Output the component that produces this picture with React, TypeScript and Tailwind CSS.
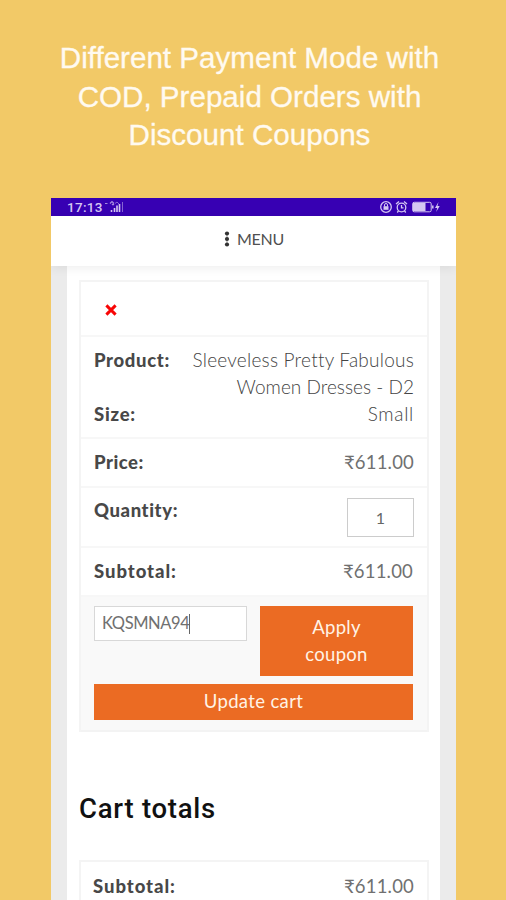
import React from 'react';

interface RowProps {
    label: string;
    children: React.ReactNode;
    className?: string;
    labelClass?: string;
}

const Row: React.FC<RowProps> = ({ label, children, className = '', labelClass = 'tracking-[0.95px]' }) => (
    <div className={`flex justify-between border-b-2 border-[#f7f7f7] pl-[13px] pr-[13px] leading-[27px] ${className}`}>
        <span className={`font-black text-[#484848] ${labelClass}`}>{label}</span>
        {children}
    </div>
);

const Price: React.FC = () => <span className="tracking-[0.2px] text-[#707070]">₹611.00</span>;

const StatusBar: React.FC = () => (
    <div className="flex h-[18px] items-center justify-between bg-[#3700b3] pl-4 pr-[15px] pt-px text-[#d5c7f2]">
        <div className="flex items-center">
            <span className="w-[35px] font-[Roboto,sans-serif] text-[13.5px] font-medium leading-[18px] tracking-[0.3px]">17:13</span>
            <svg className="ml-[2px]" width="21" height="14" viewBox="0 0 21 14" fill="none" stroke="currentColor">
                <path d="M1 3.500h2.500M6 3.500l2-2 2 2M8 5l1-1 1 1" strokeWidth="1.200" opacity=".7" />
                <path d="M7.500 12v-2M10.500 12V8M13 12V5.500M15.500 12V4" strokeWidth="1.600" />
                <path d="M11 3.500l2-1.500 2 2M18.500 12V2" strokeWidth="1" opacity=".5" />
            </svg>
        </div>
        <svg width="62" height="14" viewBox="0 0 62 14" fill="none" stroke="currentColor" strokeWidth="1.300">
            <circle cx="7" cy="7" r="5.300" />
            <rect x="4.500" y="6.200" width="5" height="3.600" fill="currentColor" stroke="none" />
            <path d="M5.500 6.500V5a1.500 1.500 0 0 1 3 0v1.500" strokeWidth="1" />
            <circle cx="22.500" cy="7.500" r="4.300" />
            <path d="M22.500 5v2.800h2M17 4l3-2.500M28 4l-3-2.500M19.500 11l-1.300 1.500M25.500 11l1.300 1.500" />
            <rect x="33.700" y="2.300" width="18.500" height="9.500" rx="1.500" strokeWidth="1" />
            <rect x="34" y="3" width="12.500" height="8" fill="currentColor" stroke="none" />
            <path d="M53.800 5.500v3" strokeWidth="1.500" />
            <path d="M59.500 2l-3.500 6h2.200l-1 4 3.500-6h-2.200z" fill="currentColor" stroke="none" />
        </svg>
    </div>
);

const Header: React.FC = () => (
    <div className="relative flex h-[50px] items-center bg-white pl-[173px] pb-[4px] text-[#505050] shadow-[0_2px_10px_rgba(0,0,0,0.07)]">
        <svg width="6" height="16" viewBox="0 0 6 16" fill="#333">
            <path d="M3 2v12" stroke="#999" strokeWidth="1" />
            <circle cx="3" cy="2.500" r="2.100" />
            <circle cx="3" cy="8" r="2.100" />
            <circle cx="3" cy="13.500" r="2.100" />
        </svg>
        <span className="ml-[7px] text-[16px] leading-5 tracking-[-0.3px]">MENU</span>
    </div>
);

const CartTable: React.FC = () => (
    <div className="border-2 border-b-0 border-[#f4f4f4] text-[18.5px]">
        <div className="flex h-[55px] items-center border-b-2 border-[#f7f7f7] pl-[24px] pt-[4px]">
            <svg width="12" height="12" viewBox="0 0 13 13" stroke="#f80505" strokeWidth="3.200">
                <path d="M1.500 1.500l10 10M11.500 1.500l-10 10" />
            </svg>
        </div>
        <div className="h-[102px] border-b-2 border-[#f7f7f7] px-[13px] pt-[10px] leading-[27px]">
            <div className="flex justify-between">
                <span className="font-black tracking-[0.65px] text-[#484848]">Product:</span>
                <span className="-mt-px mb-px text-right text-[19px] font-light text-[#444]">
                    <span className="tracking-[0.24px]">Sleeveless Pretty Fabulous</span>
                    <br />
                    <span className="tracking-[0.02px]">Women Dresses - D2</span>
                </span>
            </div>
            <div className="flex justify-between">
                <span className="font-black tracking-[0.75px] text-[#484848]">Size:</span>
                <span className="-mt-px text-[19px] font-light tracking-[0.7px] text-[#444]">Small</span>
            </div>
        </div>
        <Row label="Price:" className="h-[49px] pt-[10px]" labelClass="tracking-[0.5px]">
            <Price />
        </Row>
        <Row label="Quantity:" className="h-[60px] pt-[9px]" labelClass="tracking-[0.6px]">
            <span className="mt-px flex h-[39px] w-[67px] items-center justify-center border border-[#ccc] text-[16px] text-[#666]">1</span>
        </Row>
        <Row label="Subtotal:" className="h-[49px] pt-[10px] pr-[14px]">
            <Price />
        </Row>
        <div className="h-[135px] border-b-2 border-[#f3f3f3] bg-[#f9f9f9] pl-[13px] pr-[14px] pt-[9px]">
            <div className="flex items-start justify-between">
                <div className="flex h-[35px] w-[153px] items-center border border-[#d8d8d8] bg-white pl-[7px] pt-px text-[16.5px] tracking-[-0.4px] text-[#707070]">
                    KQSMNA94
                    <span className="h-5 w-px bg-[#666]" />
                </div>
                <button className="h-[70px] w-[153px] bg-[#eb6b23] px-8 pt-px text-[18.5px] leading-[27px] tracking-[0.3px] text-[#fff3e6]">
                    Apply coupon
                </button>
            </div>
            <button className="mt-2 block h-[36px] w-full bg-[#eb6b23] pt-px text-[18.5px] tracking-[0.35px] text-[#fff3e6]">Update cart</button>
        </div>
    </div>
);

const App: React.FC = () => (
    <div className="h-[900px] w-[506px] overflow-hidden bg-[#f2c967] font-[Lato,'Noto_Sans',sans-serif]">
        <h1 className="pt-[39px] text-center font-['Liberation_Sans',sans-serif] text-[29.6px] leading-[38.5px] text-[#fffaf0] [-webkit-text-stroke:0.3px_#fffaf0]">
            <span className="block pr-[7px]">Different Payment Mode with</span>
            <span className="block pr-[7px]">COD, Prepaid Orders with</span>
            <span className="block pr-[7px]">Discount Coupons</span>
        </h1>
        <div className="ml-[51px] mt-[43px] w-[405px] overflow-hidden bg-[#ebebeb]">
            <StatusBar />
            <Header />
            <div className="mx-4 h-[640px] bg-white pl-3 pr-[11px] pt-[14px]">
                <CartTable />
                <h2 className="mt-[59px] font-[Roboto,sans-serif] text-[27.5px] font-medium leading-9 tracking-[0.75px] text-[#111]">Cart totals</h2>
                <div className="mt-[33px] border-2 border-[#f4f4f4] text-[18.5px]">
                    <Row label="Subtotal:" className="-ml-px h-[49px] pt-[11px]">
                        <Price />
                    </Row>
                </div>
            </div>
        </div>
    </div>
);

export default App;
